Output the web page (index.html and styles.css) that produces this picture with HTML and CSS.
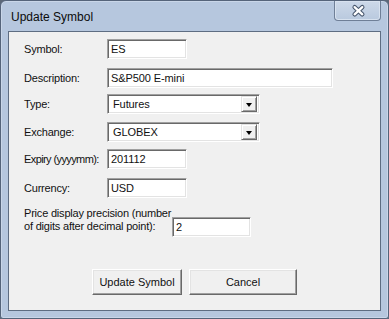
FILE: index.html
```html
<!DOCTYPE html>
<html>
<head>
<meta charset="utf-8">
<title>Update Symbol</title>
<link rel="stylesheet" href="styles.css">
</head>
<body>
<div class="window">
  <div class="titlebar">
    <span class="title">Update Symbol</span>
    <div class="close">
      <svg width="47" height="19" viewBox="0 0 47 19">
        <path d="M20.5 6 L28.5 13.5 M28.5 6 L20.5 13.5" stroke="#46556b" stroke-width="4.6" stroke-linecap="round" fill="none"/>
        <path d="M20.5 6 L28.5 13.5 M28.5 6 L20.5 13.5" stroke="#ffffff" stroke-width="2.4" stroke-linecap="round" fill="none"/>
      </svg>
    </div>
  </div>
  <div class="client">
    <div class="form">
      <div class="row r1"><span class="label">Symbol:</span><div class="field w-short">ES</div></div>
      <div class="row r2"><span class="label">Description:</span><div class="field w-long">S&amp;P500 E-mini</div></div>
      <div class="row r3"><span class="label">Type:</span><div class="combo"><span class="combo-text">Futures</span><span class="drop"><span class="tri"></span></span></div></div>
      <div class="row r4"><span class="label">Exchange:</span><div class="combo"><span class="combo-text">GLOBEX</span><span class="drop"><span class="tri"></span></span></div></div>
      <div class="row r5"><span class="label label-tight">Expiry (yyyymm):</span><div class="field w-short">201112</div></div>
      <div class="row r6"><span class="label">Currency:</span><div class="field w-short">USD</div></div>
      <div class="row-precision">
        <span class="label-multi">Price display precision (number<br>of digits after decimal point):</span>
        <div class="field w-short prec">2</div>
      </div>
    </div>
    <div class="buttons">
      <button class="btn btn-update">Update Symbol</button>
      <button class="btn btn-cancel">Cancel</button>
    </div>
  </div>
</div>
</body>
</html>
```
FILE: styles.css
```css
* { box-sizing: border-box; }
html, body { margin: 0; padding: 0; }
body {
  width: 389px;
  height: 319px;
  background: #5c6878;
  font-family: "Liberation Sans", Arial, sans-serif;
  overflow: hidden;
}
.window {
  width: 389px;
  height: 319px;
  border: 1px solid #55647a;
  border-radius: 6px 6px 3px 3px;
  background: #b6c7de;
  padding: 0 7px 7px 7px;
  display: flex;
  flex-direction: column;
  box-shadow: inset 0 0 0 1px #c9d6e8;
}
.titlebar {
  height: 30px;
  display: flex;
  justify-content: space-between;
  align-items: flex-start;
  flex: none;
}
.title {
  align-self: center;
  font-size: 12px;
  color: #0c0c0c;
  padding-left: 3px;
  padding-top: 1px;
}
.close {
  width: 47px;
  height: 20px;
  border: 1px solid #6f7f97;
  border-top: none;
  border-radius: 0 0 4px 4px;
  background: linear-gradient(#cdd9e9, #b9c9de);
  box-shadow: inset 0 0 0 1px #d8e2ef;
  display: flex;
}
.close svg { display: block; }
.client {
  flex: 1;
  background: #f0f0f0;
  border: 1px solid #5e6d82;
  display: flex;
  flex-direction: column;
}
.form {
  padding: 7px 0 0 15px;
  display: flex;
  flex-direction: column;
  font-size: 11px;
  color: #111;
}
.row {
  display: flex;
  align-items: center;
  height: 20px;
}
.r2 { margin-top: 9px; }
.r3 { margin-top: 6px; }
.r4 { margin-top: 8px; }
.r5 { margin-top: 7px; }
.r6 { margin-top: 9px; }
.label {
  width: 83px;
  flex: none;
  white-space: nowrap;
  letter-spacing: -0.2px;
}
.label-tight { letter-spacing: -0.6px; }
.field {
  height: 20px;
  border: 1px solid;
  border-color: #a0a0a0 #ffffff #ffffff #a0a0a0;
  box-shadow: inset 1px 1px 0 #696969, inset -1px -1px 0 #e3e3e3;
  background: #fff;
  padding: 0 0 0 3px;
  display: flex;
  align-items: center;
  font-size: 11px;
  color: #111;
  white-space: nowrap;
  letter-spacing: -0.1px;
}
.w-short { width: 80px; }
.w-long { width: 226px; }
.combo {
  width: 153px;
  height: 20px;
  border: 1px solid;
  border-color: #a0a0a0 #ffffff #ffffff #a0a0a0;
  box-shadow: inset 1px 1px 0 #696969, inset -1px -1px 0 #e3e3e3;
  background: #fff;
  padding: 2px 2px 2px 5px;
  display: flex;
  align-items: center;
  justify-content: space-between;
}
.combo-text { font-size: 11px; color: #111; letter-spacing: -0.1px; }
.drop {
  width: 16px;
  height: 16px;
  background: #f0f0f0;
  border: 1px solid;
  border-color: #e3e3e3 #696969 #696969 #e3e3e3;
  box-shadow: inset 1px 1px 0 #ffffff, inset -1px -1px 0 #a0a0a0;
  display: flex;
  align-items: center;
  justify-content: center;
}
.tri {
  width: 0;
  height: 0;
  border-left: 3.5px solid transparent;
  border-right: 3.5px solid transparent;
  border-top: 4px solid #000;
  margin-top: 1px;
}
.row-precision {
  display: flex;
  align-items: flex-start;
  margin-top: 9px;
}
.label-multi {
  width: 148px;
  flex: none;
  line-height: 13px;
  white-space: nowrap;
  letter-spacing: -0.2px;
}
.prec { margin-top: 10px; width: 79px; }
.buttons {
  margin-top: 32px;
  display: flex;
  justify-content: center;
  gap: 7px;
}
.btn {
  height: 26px;
  font-family: "Liberation Sans", Arial, sans-serif;
  font-size: 11px;
  color: #111;
  background: #f0f0f0;
  border: 1px solid;
  border-color: #ffffff #696969 #696969 #ffffff;
  box-shadow: inset -1px -1px 0 #a0a0a0, inset 1px 1px 0 #e3e3e3;
  padding: 0;
  margin: 0;
}
.btn-update { width: 90px; }
.btn-cancel { width: 108px; }
```
